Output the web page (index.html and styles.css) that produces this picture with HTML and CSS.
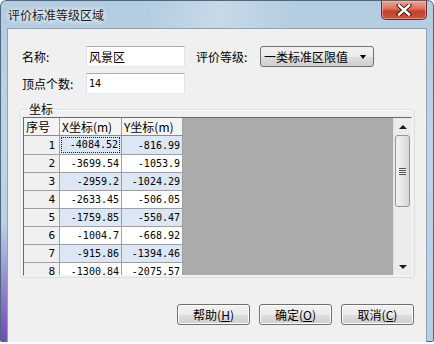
FILE: index.html
```html
<!DOCTYPE html>
<html>
<head>
<title>评价标准等级区域</title>
<link rel="stylesheet" href="styles.css">
</head>
<body>
<div class="window">
  <div class="titlebar">
    <span class="title">评价标准等级区域</span>
    <div class="close">
      <svg width="16" height="12" viewBox="0 0 16 12">
        <path d="M3 1.5 L13 10.5 M13 1.5 L3 10.5" stroke="#4a1a14" stroke-width="4.4" stroke-linecap="square"/>
        <path d="M3 1.5 L13 10.5 M13 1.5 L3 10.5" stroke="#ffffff" stroke-width="2.4" stroke-linecap="square"/>
      </svg>
    </div>
  </div>
  <div class="client">
    <div class="row">
      <span class="lbl">名称:</span>
      <div class="edit">风景区</div>
      <span class="lbl lbl2">评价等级:</span>
      <div class="combo">一类标准区限值<span class="arrow"></span></div>
    </div>
    <div class="row row2">
      <span class="lbl">顶点个数:</span>
      <div class="edit num">14</div>
    </div>
    <fieldset class="group">
      <legend>坐标</legend>
      <div class="grid">
        <div class="cells">
          <table class="coords">
            <tr class="head"><td class="c1">序号</td><td class="c2">X坐标(m)</td><td class="c3">Y坐标(m)</td></tr>
            <tr class="alt"><td class="idx">1</td><td class="focus"><span>-4084.52</span></td><td>-816.99</td></tr>
            <tr><td class="idx">2</td><td>-3699.54</td><td>-1053.9</td></tr>
            <tr class="alt"><td class="idx">3</td><td>-2959.2</td><td>-1024.29</td></tr>
            <tr><td class="idx">4</td><td>-2633.45</td><td>-506.05</td></tr>
            <tr class="alt"><td class="idx">5</td><td>-1759.85</td><td>-550.47</td></tr>
            <tr><td class="idx">6</td><td>-1004.7</td><td>-668.92</td></tr>
            <tr class="alt"><td class="idx">7</td><td>-915.86</td><td>-1394.46</td></tr>
            <tr><td class="idx">8</td><td>-1300.84</td><td>-2075.57</td></tr>
          </table>
        </div>
        <div class="vscroll">
          <div class="sbtn"><span class="up"></span></div>
          <div class="thumb"><span class="grip"></span></div>
          <div class="track"></div>
          <div class="sbtn"><span class="down"></span></div>
        </div>
      </div>
    </fieldset>
    <div class="buttons">
      <button class="btn">帮助(<u>H</u>)</button>
      <button class="btn">确定(<u>O</u>)</button>
      <button class="btn">取消(<u>C</u>)</button>
    </div>
  </div>
</div>
</body>
</html>
```

FILE: styles.css
```css
body {
  margin: 0;
  background: #ffffff;
  font-family: "Noto Sans CJK SC", "DejaVu Sans", sans-serif;
  font-size: 12px;
}

.window {
  width: 434px;
  height: 342px;
  box-sizing: border-box;
  padding: 0 7px 5px 7px;
  border-radius: 6px 6px 2px 2px;
  background:
    radial-gradient(ellipse 60px 120px at 0 100%, rgba(108, 62, 180, 0.95), rgba(108, 62, 180, 0) 100%),
    linear-gradient(100deg, rgba(255,255,255,0) 30%, rgba(255,255,255,0.25) 45%, rgba(255,255,255,0) 60%),
    linear-gradient(180deg, #b3cce0 0%, #bed4e6 40%, #b6cfe3 100%);
  box-shadow: inset 0 0 0 1px #51677e;
}

.titlebar {
  height: 28px;
  display: flex;
  justify-content: space-between;
  align-items: flex-start;
}
.title {
  padding: 7px 0 0 1px;
  line-height: 16px;
  color: #1a1a1a;
  text-shadow: 0 0 4px #ffffff, 0 0 6px #ffffff;
}
.close {
  margin-top: 1px;
  width: 46px;
  height: 19px;
  box-sizing: border-box;
  border: 1px solid #6e2a20;
  border-top: 0;
  border-radius: 0 0 5px 5px;
  background: linear-gradient(180deg, #e9a695 0%, #d9705c 45%, #c4412b 55%, #c9553c 100%);
  box-shadow: inset 0 0 0 1px rgba(255, 200, 190, 0.5);
  display: flex;
  align-items: center;
  justify-content: center;
}

.client {
  height: 307px;
  border: 1px solid #8ca3ba;
  background: #f0f0f0;
  padding: 17px 12px 0 12px;
}

.row {
  display: flex;
  align-items: center;
  height: 21px;
  padding-left: 2px;
}
.row2 {
  margin-top: 6px;
}
.lbl {
  width: 64px;
  line-height: 21px;
  color: #000;
}
.lbl2 {
  margin-left: 11px;
}
.edit {
  width: 99px;
  height: 21px;
  box-sizing: border-box;
  border: 1px solid #e2e3ea;
  border-top-color: #abadb3;
  border-bottom-color: #e3e9ef;
  background: #fff;
  padding-left: 2px;
  line-height: 19px;
}
.num {
  font-family: "DejaVu Sans Mono", monospace;
  font-size: 10px;
}
.combo {
  width: 114px;
  height: 21px;
  box-sizing: border-box;
  border: 1px solid #707070;
  border-radius: 3px;
  background: linear-gradient(180deg, #f2f2f2 0%, #ebebeb 50%, #dddddd 51%, #cfcfcf 100%);
  padding-left: 3px;
  line-height: 19px;
  display: flex;
  align-items: center;
}
.arrow {
  margin-left: auto;
  margin-right: 7px;
  border-left: 3px solid transparent;
  border-right: 3px solid transparent;
  border-top: 4px solid #000;
}

.group {
  margin: 8px 0 0 0;
  width: 395px;
  box-sizing: border-box;
  padding: 1px 2px 1px 2px;
  border: 1px solid #d5dfe5;
  border-radius: 3px;
  box-shadow: inset 1px 1px 0 #fff;
}
.group legend {
  padding: 0 2px;
  margin-left: 4px;
  line-height: 14px;
  color: #000;
}

.grid {
  height: 159px;
  box-sizing: border-box;
  display: flex;
  border-top: 1px solid #6a6a6a;
  border-left: 1px solid #6a6a6a;
  border-right: 1px solid #f4f4f4;
  border-bottom: 1px solid #f4f4f4;
}
.cells {
  flex: 1;
  background: #ababab;
  overflow: hidden;
}
.coords {
  table-layout: fixed;
  width: 159px;
  border-collapse: separate;
  border-spacing: 0;
  font-family: "DejaVu Sans Mono", monospace;
  font-size: 10px;
}
.coords td {
  box-sizing: border-box;
  padding: 0 2px 0 0;
  line-height: 17px;
  height: 18px;
  border-right: 1px solid #a0a0a0;
  border-bottom: 1px solid #a0a0a0;
  background: #ffffff;
  text-align: right;
  white-space: nowrap;
  overflow: hidden;
}
.coords .c1 { width: 36px; }
.coords .c2 { width: 62px; }
.coords .c3 { width: 61px; }
.coords .head td {
  background: #f4f4f4;
  text-align: left;
  padding-left: 2px;
  font-family: "Noto Sans CJK SC", sans-serif;
  font-size: 12px;
  border-bottom-color: #8c8c8c;
}
.coords .alt td {
  background: #dce6f4;
}
.coords td.idx,
.coords .alt td.idx {
  background: #f0f0f0;
  padding-right: 4px;
  font-size: 11px;
}
.coords td.focus {
  padding: 1px 1px 1px 1px;
}
.coords td.focus span {
  display: block;
  line-height: 14px;
  border: 1px dotted #222;
  padding-right: 1px;
}

.vscroll {
  width: 17px;
  display: flex;
  flex-direction: column;
  background: #ececec;
  border-left: 1px solid #e2e2e2;
}
.sbtn {
  height: 17px;
  display: flex;
  align-items: center;
  justify-content: center;
}
.up {
  border-left: 4px solid transparent;
  border-right: 4px solid transparent;
  border-bottom: 4px solid #1a1a1a;
}
.down {
  border-left: 4px solid transparent;
  border-right: 4px solid transparent;
  border-top: 4px solid #1a1a1a;
}
.thumb {
  margin: 0 1px;
  height: 70px;
  border: 1px solid #959595;
  border-radius: 3px;
  background: linear-gradient(90deg, #f3f3f3 0%, #e6e6e6 50%, #d6d6d6 100%);
  display: flex;
  align-items: center;
  justify-content: center;
}
.grip {
  width: 7px;
  height: 7px;
  background: repeating-linear-gradient(180deg, #4f4f4f 0, #4f4f4f 1px, #f4f4f4 1px, #f4f4f4 2px);
}
.track {
  flex: 1;
}

.buttons {
  margin-top: 26px;
  display: flex;
  justify-content: flex-end;
  gap: 9px;
}
.btn {
  width: 73px;
  height: 21px;
  padding: 0;
  border: 1px solid #707070;
  border-radius: 3px;
  background: linear-gradient(180deg, #f2f2f2 0%, #ebebeb 50%, #dddddd 51%, #cfcfcf 100%);
  box-shadow: inset 0 0 0 1px #fcfcfc;
  font-family: "Noto Sans CJK SC", sans-serif;
  font-size: 12px;
  color: #000;
  line-height: 19px;
}
```
